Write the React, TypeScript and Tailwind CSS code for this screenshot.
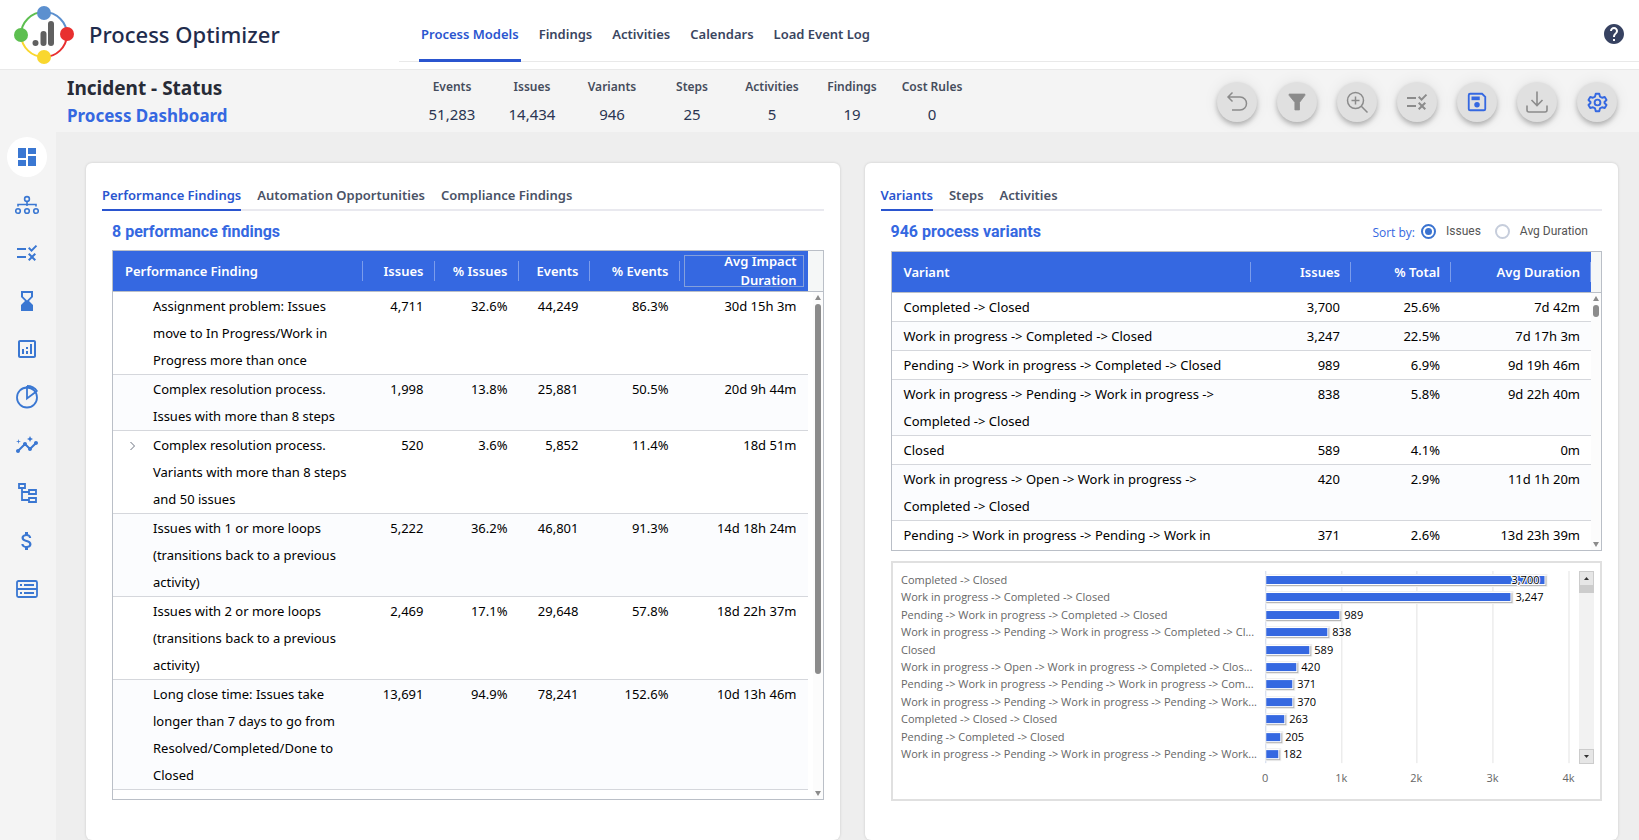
import type { ReactNode } from "react";
import {
  MdAttachMoney,
  MdDashboard,
  MdHelp,
  MdHourglassBottom,
  MdInsights,
  MdOutlineAnalytics,
  MdRule,
} from "react-icons/md";

const models = ["Process Models", "Findings", "Activities", "Calendars", "Load Event Log"];

const stats = [
  { label: "Events", value: "51,283" },
  { label: "Issues", value: "14,434" },
  { label: "Variants", value: "946" },
  { label: "Steps", value: "25" },
  { label: "Activities", value: "5" },
  { label: "Findings", value: "19" },
  { label: "Cost Rules", value: "0" },
];

const findings = [
  {
    name: "Assignment problem: Issues move to In Progress/Work in Progress more than once",
    cells: ["4,711", "32.6%", "44,249", "86.3%", "30d 15h 3m"],
  },
  {
    name: "Complex resolution process. Issues with more than 8 steps",
    cells: ["1,998", "13.8%", "25,881", "50.5%", "20d 9h 44m"],
  },
  {
    name: "Complex resolution process. Variants with more than 8 steps and 50 issues",
    cells: ["520", "3.6%", "5,852", "11.4%", "18d 51m"],
    expandable: true,
  },
  {
    name: "Issues with 1 or more loops (transitions back to a previous activity)",
    cells: ["5,222", "36.2%", "46,801", "91.3%", "14d 18h 24m"],
  },
  {
    name: "Issues with 2 or more loops (transitions back to a previous activity)",
    cells: ["2,469", "17.1%", "29,648", "57.8%", "18d 22h 37m"],
  },
  {
    name: "Long close time: Issues take longer than 7 days to go from Resolved/Completed/Done to Closed",
    cells: ["13,691", "94.9%", "78,241", "152.6%", "10d 13h 46m"],
  },
];

const variants = [
  { name: "Completed -> Closed", cells: ["3,700", "25.6%", "7d 42m"] },
  { name: "Work in progress -> Completed -> Closed", cells: ["3,247", "22.5%", "7d 17h 3m"] },
  { name: "Pending -> Work in progress -> Completed -> Closed", cells: ["989", "6.9%", "9d 19h 46m"] },
  {
    name: "Work in progress -> Pending -> Work in progress -> Completed -> Closed",
    cells: ["838", "5.8%", "9d 22h 40m"],
  },
  { name: "Closed", cells: ["589", "4.1%", "0m"] },
  {
    name: "Work in progress -> Open -> Work in progress -> Completed -> Closed",
    cells: ["420", "2.9%", "11d 1h 20m"],
  },
  {
    name: "Pending -> Work in progress -> Pending -> Work in progress -> Completed -> Closed",
    cells: ["371", "2.6%", "13d 23h 39m"],
  },
];

const bars = [
  { label: "Completed -> Closed", value: 3700 },
  { label: "Work in progress -> Completed -> Closed", value: 3247 },
  { label: "Pending -> Work in progress -> Completed -> Closed", value: 989 },
  { label: "Work in progress -> Pending -> Work in progress -> Completed -> Cl...", value: 838 },
  { label: "Closed", value: 589 },
  { label: "Work in progress -> Open -> Work in progress -> Completed -> Clos...", value: 420 },
  { label: "Pending -> Work in progress -> Pending -> Work in progress -> Com...", value: 371 },
  { label: "Work in progress -> Pending -> Work in progress -> Pending -> Work...", value: 370 },
  { label: "Completed -> Closed -> Closed", value: 263 },
  { label: "Pending -> Completed -> Closed", value: 205 },
  { label: "Work in progress -> Pending -> Work in progress -> Pending -> Work...", value: 182 },
];

function Icon({ size = 24, width = 2, children }: { size?: number; width?: number; children: ReactNode }) {
  return (
    <svg width={size} height={size} viewBox="0 0 24 24" fill="none" stroke="currentColor" strokeWidth={width}>
      {children}
    </svg>
  );
}

const sideItems = [
  { label: "Dashboard", icon: <MdDashboard size={24} /> },
  {
    label: "Process map",
    icon: (
      <Icon width={1.6}>
        <circle cx="12" cy="6" r="2.4" />
        <circle cx="3" cy="18" r="2.3" />
        <circle cx="12" cy="18" r="2.3" />
        <circle cx="21" cy="18" r="2.3" />
        <path d="M12 8.4V13M3 13.5V11.5H21V13.5" />
      </Icon>
    ),
  },
  { label: "Rules", icon: <MdRule size={24} /> },
  { label: "Durations", icon: <MdHourglassBottom size={24} /> },
  { label: "Analytics", icon: <MdOutlineAnalytics size={24} /> },
  {
    label: "Breakdown",
    icon: (
      <Icon width={1.8}>
        <circle cx="12" cy="12.5" r="10" />
        <path d="M12 1V13.5L22 6" />
        <path d="M12 1C16 1 20 3 22.2 6.4" />
      </Icon>
    ),
  },
  { label: "Insights", icon: <MdInsights size={24} /> },
  {
    label: "Hierarchy",
    icon: (
      <Icon width={1.8}>
        <path d="M4 3H10V7H4ZM14 9H21V13H14ZM14 17H21V21H14ZM7 7V19H14M7 11H14" />
      </Icon>
    ),
  },
  { label: "Costs", icon: <MdAttachMoney size={24} /> },
  {
    label: "Data",
    icon: (
      <Icon width={1.8}>
        <rect x="2" y="4" width="20" height="16" rx="1.5" />
        <path d="M2 12H22M5 8H7M9 8H19M5 16H7M9 16H19" />
      </Icon>
    ),
  },
];

const tools = [
  {
    label: "Undo",
    icon: (
      <Icon width={1.5}>
        <path d="M7.5 2.5L3 7L7.5 11.5M3 7H15C19 7 21.500 10 21.500 13.5S19 20 15 20H7" />
      </Icon>
    ),
  },
  {
    label: "Filter",
    icon: (
      <Icon size={20} width={1}>
        <path d="M2.500 2.500H21.500V4L15 12.500V21.500H9.500V12.500L2.500 4Z" fill="currentColor" />
      </Icon>
    ),
  },
  {
    label: "Zoom in",
    icon: (
      <Icon width={1.5}>
        <circle cx="10.5" cy="10.5" r="8" />
        <path d="M16.3 16.3L22.500 22.500M6.5 10.5H14.5M10.5 6.5V14.5" />
      </Icon>
    ),
  },
  { label: "Rules", icon: <MdRule size={24} /> },
  {
    label: "Save",
    active: true,
    icon: (
      <Icon size={22}>
        <path d="M4.5 3H17.5L21 6.5V19.5Q21 21 19.5 21H4.5Q3 21 3 19.5V4.5Q3 3 4.5 3Z" />
        <rect x="6" y="6" width="9" height="4" fill="currentColor" stroke="none" />
        <circle cx="12" cy="15" r="3" fill="currentColor" stroke="none" />
      </Icon>
    ),
  },
  {
    label: "Download",
    icon: (
      <Icon width={1.6}>
        <path d="M12 1.5V15M6.5 10L12 15.5L17.5 10M2 15.500V20Q2 22 4 22H20Q22 22 22 20V15.500" />
      </Icon>
    ),
  },
  {
    label: "Settings",
    active: true,
    icon: (
      <Icon size={21} width={2.2}>
        <path
          strokeLinejoin="round"
          d="M10 2H14L14.800 5.200L17.200 6.600L20.300 5.700L22.300 9.100L20 11.400V12.600L22.300 14.900L20.300 18.300L17.200 17.400L14.800 18.800L14 22H10L9.200 18.800L6.800 17.400L3.700 18.300L1.700 14.900L4 12.600V11.400L1.700 9.100L3.700 5.700L6.800 6.600L9.200 5.200Z"
        />
        <circle cx="12" cy="12" r="3.3" />
      </Icon>
    ),
  },
];

function Logo() {
  return (
    <svg width="60" height="58" viewBox="0 0 60 58" fill="none">
      <g strokeWidth="2">
        <path d="M7 29A23 23 0 0 1 30 6" stroke="#5dbf50" />
        <path d="M30 6A23 23 0 0 1 53 29" stroke="#5c90cf" />
        <path d="M53 29A23 23 0 0 1 30 51" stroke="#e83030" />
        <path d="M30 51A23 23 0 0 1 7 29" stroke="#f9d72f" />
      </g>
      <circle cx="30" cy="7" r="7" fill="#5c90cf" />
      <circle cx="53" cy="28" r="7" fill="#e83030" />
      <circle cx="30" cy="51" r="7" fill="#f9d72f" />
      <circle cx="7" cy="29" r="7" fill="#5dbf50" />
      <circle cx="21.5" cy="37" r="3" fill="#606060" />
      <rect x="26.5" y="25" width="6" height="15" rx="3" fill="#606060" />
      <rect x="34" y="15" width="6" height="25" rx="3" fill="#606060" />
    </svg>
  );
}

function Tabs({ items }: { items: string[] }) {
  return (
    <nav className="flex gap-4 border-b-2 border-[#e9e9ef]">
      {items.map((item, i) => (
        <button
          key={item}
          className={
            i === 0
              ? "-mb-0.5 border-b-2 border-[#2a55cf] pb-0.5 text-[13px] leading-6 font-semibold text-[#2a55cf]"
              : "pb-0.5 text-[13px] leading-6 font-semibold text-[#4a5266]"
          }
        >
          {item}
        </button>
      ))}
    </nav>
  );
}

function HeadCell({ children }: { children: ReactNode }) {
  return (
    <th className="p-0 font-semibold">
      <div className="flex h-5 items-center justify-end border-r border-white/35 pt-0.5 pr-2.5">{children}</div>
    </th>
  );
}

// Header gutter above a slim scrollbar
function Scrollbar({ gutter, thumb }: { gutter: string; thumb: string }) {
  return (
    <div className={gutter}>
      <div className="h-[41px] w-full shrink-0 border-b border-[#babfc7] bg-[#f5f7f7]" />
      <div className="flex w-2.5 flex-1 flex-col items-center bg-[#fcfcfc] py-[3px]">
        <svg width="6" height="5" viewBox="0 0 6 5" fill="#8b8b8b">
          <path d="M3 0L6 5H0Z" />
        </svg>
        <div className={thumb} />
        <svg className="mt-auto" width="6" height="5" viewBox="0 0 6 5" fill="#8b8b8b">
          <path d="M0 0H6L3 5Z" />
        </svg>
      </div>
    </div>
  );
}

function FindingsTable() {
  return (
    <div className="ml-2.5 flex h-[550px] overflow-hidden border border-[#babfc7]">
      <div className="min-w-0 flex-1 overflow-hidden">
        <table className="w-full table-fixed text-right text-[13px] leading-[27px] text-black">
          <colgroup>
            <col />
            <col className="w-[72px]" />
            <col className="w-[84px]" />
            <col className="w-[71px]" />
            <col className="w-[90px]" />
            <col className="w-[128px]" />
          </colgroup>
          <thead>
            <tr className="h-10 border-b border-[#babfc7] bg-[#3568e1] text-white">
              <th className="p-0 text-left font-semibold">
                <div className="flex h-5 items-center border-r border-white/35 pt-0.5 pl-3">Performance Finding</div>
              </th>
              <HeadCell>Issues</HeadCell>
              <HeadCell>% Issues</HeadCell>
              <HeadCell>Events</HeadCell>
              <HeadCell>% Events</HeadCell>
              <th className="p-0 font-semibold">
                <div className="mx-1 flex h-8 items-center border border-[#84a0dc] pr-1.5 pl-8 leading-[19px]">
                  Avg Impact Duration
                </div>
              </th>
            </tr>
          </thead>
          <tbody>
            {findings.map((row) => (
              <tr key={row.name} className="border-b border-[#d5d7dc] align-top even:bg-[#fbfcfe]">
                <td className="flex p-0 pt-px text-left">
                  <div className="flex w-10 shrink-0 justify-center">
                    {row.expandable && (
                      <button aria-label="Expand" className="h-7 text-[#6b7280]">
                        <svg width="8" height="10" viewBox="0 0 8 10" fill="none" stroke="currentColor">
                          <path d="M1.5 1L5.5 5L1.5 9" />
                        </svg>
                      </button>
                    )}
                  </div>
                  <span className="pr-2">{row.name}</span>
                </td>
                {row.cells.map((cell) => (
                  <td key={cell} className="p-0 pt-px pr-[11px]">
                    {cell}
                  </td>
                ))}
              </tr>
            ))}
          </tbody>
        </table>
      </div>
      <Scrollbar
        gutter="flex w-[15px] shrink-0 flex-col items-end"
        thumb="mt-1 h-[370px] w-1.5 rounded-full bg-[#8b8b8b]"
      />
    </div>
  );
}

function VariantsTable() {
  return (
    <div className="ml-2.5 flex h-[300px] overflow-hidden border border-[#babfc7]">
      <div className="min-w-0 flex-1 overflow-hidden">
        <table className="w-full table-fixed text-right text-[13px] leading-[27px] text-black">
          <colgroup>
            <col />
            <col className="w-[100px]" />
            <col className="w-[100px]" />
            <col className="w-[140px]" />
          </colgroup>
          <thead>
            <tr className="h-10 border-b border-[#babfc7] bg-[#3568e1] text-white">
              <th className="p-0 text-left font-semibold">
                <div className="flex h-5 items-center border-r border-white/35 pt-0.5 pl-3">Variant</div>
              </th>
              <HeadCell>Issues</HeadCell>
              <HeadCell>% Total</HeadCell>
              <HeadCell>Avg Duration</HeadCell>
            </tr>
          </thead>
          <tbody>
            {variants.map((row) => (
              <tr key={row.name} className="border-b border-[#d5d7dc] align-top even:bg-[#fbfcfe]">
                <td className="p-0 pt-px pr-2 pl-3 text-left">{row.name}</td>
                {row.cells.map((cell) => (
                  <td key={cell} className="p-0 pt-px pr-[11px]">
                    {cell}
                  </td>
                ))}
              </tr>
            ))}
          </tbody>
        </table>
      </div>
      <Scrollbar
        gutter="flex w-2.5 shrink-0 flex-col items-end"
        thumb="mt-1 h-3 w-1.5 shrink-0 rounded-full bg-[#8b8b8b]"
      />
    </div>
  );
}

function VariantsChart() {
  const x0 = 372;
  const scale = 0.0757;
  return (
    <div className="mt-2.5 ml-2.5 flex border-2 border-[#e0e0e0]">
      <svg viewBox="0 0 683 236" className="min-w-0 flex-1 font-['Open_Sans',sans-serif]" fontSize="11">
        {[0, 1, 2, 3, 4].map((k) => (
          <g key={k}>
            <rect x={x0 + Math.round(k * 75.7)} y="8" width="1" height="192" fill={k === 0 ? "#ccd6eb" : "#e3e3e3"} />
            <text x={x0 + Math.round(k * 75.7)} y="219" textAnchor="middle" fill="#666">
              {k === 0 ? "0" : `${k}k`}
            </text>
          </g>
        ))}
        {bars.map((bar, i) => {
          const y = 13 + Math.round(i * 17.4);
          const w = Math.round(bar.value * scale);
          const inside = i === 0;
          return (
            <g key={i}>
              <text x="8" y={y + 8} fill="#666">
                {bar.label}
              </text>
              <rect x={x0} y={y - 2} width={w + 2} height="13" fill="#f0f0f0" />
              <rect x={x0 + 1} y={y} width={w} height="10" fill="#b5b5b5" />
              <rect x={x0 + 1} y={y - 1} width={w - 1} height="10" fill="#fff" />
              <rect x={x0 + 1} y={y} width={w - 2} height="8" fill="#3568e1" />
              <text
                x={inside ? x0 + w - 6 : x0 + w + 4}
                y={y + 8}
                textAnchor={inside ? "end" : "start"}
                fill="#000"
                stroke={inside ? "#fff" : "none"}
                strokeWidth={inside ? 2 : 0}
                paintOrder="stroke"
              >
                {bar.value.toLocaleString("en-US")}
              </text>
            </g>
          );
        })}
      </svg>
      <div className="mt-2 mr-1.5 ml-[3px] flex h-[193px] w-[15px] flex-col bg-[#f2f2f2]">
        <button aria-label="Scroll up" className="flex h-[15px] items-center justify-center border border-[#ccc] bg-[#e6e6e6]">
          <svg width="5" height="3" viewBox="0 0 5 3" fill="#333">
            <path d="M0 3L2.5 0L5 3Z" />
          </svg>
        </button>
        <div className="h-[7px] bg-[#ccc]" />
        <button
          aria-label="Scroll down"
          className="mt-auto flex h-[15px] items-center justify-center border border-[#ccc] bg-[#e6e6e6]"
        >
          <svg width="5" height="3" viewBox="0 0 5 3" fill="#333">
            <path d="M0 0H5L2.5 3Z" />
          </svg>
        </button>
      </div>
    </div>
  );
}

const radioClass =
  "m-0 size-[15px] appearance-none rounded-full border-2 border-[#c6cddb] bg-white p-[2px] checked:border-[#3a73d0] checked:bg-[#3a73d0] checked:bg-clip-content";

export default function App() {
  return (
    <div className="flex min-h-screen flex-col bg-[#eee] font-['Noto_Sans','Open_Sans',sans-serif] text-[#1f2c4d]">
      {/* Top bar */}
      <header className="flex h-[70px] border-b border-[#e9e9e9] bg-white">
        <div className="flex w-[399px] shrink-0 items-center gap-[15px] pl-3.5">
          <Logo />
          <h1 className="text-[22px] font-medium whitespace-nowrap text-[#1f2c4d]">Process Optimizer</h1>
        </div>
        <div className="flex h-[62px] flex-1 items-stretch border-b border-[#e9e9e9] pl-5">
          <nav className="-mb-px flex gap-4">
            {models.map((item, i) => (
              <a
                key={item}
                href="#"
                className={
                  i === 0
                    ? "flex items-center border-b-[3px] border-[#2a55cf] px-0.5 pt-2.5 text-[13px] font-semibold text-[#2a55cf]"
                    : "flex items-center border-b-[3px] border-transparent px-0.5 pt-2.5 text-[13px] font-semibold text-[#3a4560]"
                }
              >
                {item}
              </a>
            ))}
          </nav>
          <button aria-label="Help" className="mt-1.5 mr-[13px] ml-auto text-[#374261]">
            <MdHelp size={24} />
          </button>
        </div>
      </header>

      {/* Model summary */}
      <section className="flex h-[62px] items-center bg-[#f4f4f4] pt-0.5">
        <div className="w-[412px] shrink-0 pl-[67px]">
          <h2 className="text-[19px] leading-7 font-bold text-[#272b36]">Incident - Status</h2>
          <h3 className="text-[17px] leading-7 font-bold text-[#3568e1]">Process Dashboard</h3>
        </div>
        <dl className="flex text-center">
          {stats.map((s) => (
            <div key={s.label} className="w-20">
              <dt className="text-[12px] leading-6 font-semibold whitespace-nowrap text-[#454c5c]">{s.label}</dt>
              <dd className="text-[15px] leading-[30px] text-[#2a3552]">{s.value}</dd>
            </div>
          ))}
        </dl>
        <div className="mr-[22px] ml-auto flex gap-5">
          {tools.map((tool) => (
            <button
              key={tool.label}
              aria-label={tool.label}
              className={
                tool.active
                  ? "flex size-10 items-center justify-center rounded-full bg-[#e0e0e0] text-[#3568e1] shadow-[0_3px_5px_rgba(0,0,0,0.25),0_0_16px_rgba(0,0,0,0.07)]"
                  : "flex size-10 items-center justify-center rounded-full bg-[#e0e0e0] text-[#8b8b8b] shadow-[0_3px_5px_rgba(0,0,0,0.25),0_0_16px_rgba(0,0,0,0.07)]"
              }
            >
              {tool.icon}
            </button>
          ))}
        </div>
      </section>

      <div className="flex flex-1">
        <aside className="flex w-14 shrink-0 flex-col gap-2 bg-[#f4f4f4] pt-[5px] pl-[7px]">
          {sideItems.map((item, i) => (
            <button
              key={item.label}
              aria-label={item.label}
              className={
                i === 0
                  ? "flex size-10 items-center justify-center rounded-full bg-white text-[#3a77d2]"
                  : "flex size-10 items-center justify-center rounded-full text-[#3a77d2]"
              }
            >
              {item.icon}
            </button>
          ))}
        </aside>

        <main className="grid min-w-0 flex-1 grid-cols-2 gap-[25px] pt-[31px] pr-[21px] pl-[30px]">
          <section className="rounded-md bg-white px-4 pt-5 shadow-[0_0_3px_rgba(0,0,0,0.15)]">
            <Tabs items={["Performance Findings", "Automation Opportunities", "Compliance Findings"]} />
            <h4 className="ml-2.5 flex h-[39px] items-center pt-0.5 font-['Roboto',sans-serif] text-[16px] font-bold text-[#3568e1]">
              8 performance findings
            </h4>
            <FindingsTable />
          </section>

          <section className="rounded-md bg-white px-4 pt-5 shadow-[0_0_3px_rgba(0,0,0,0.15)]">
            <Tabs items={["Variants", "Steps", "Activities"]} />
            <div className="ml-2.5 flex h-10 items-center pr-3.5 font-['Roboto',sans-serif]">
              <h4 className="pt-0.5 text-[16px] font-bold text-[#3568e1]">946 process variants</h4>
              <div className="ml-auto flex items-center text-[12px] text-[#555]">
                <span className="mr-1.5 pt-1 font-['Open_Sans',sans-serif] text-[#3568e1]">Sort by:</span>
                <label className="mr-3.5 flex items-center gap-2.5">
                  <input type="radio" name="sort" defaultChecked className={radioClass} />
                  Issues
                </label>
                <label className="flex items-center gap-2.5">
                  <input type="radio" name="sort" className={radioClass} />
                  Avg Duration
                </label>
              </div>
            </div>
            <VariantsTable />
            <VariantsChart />
          </section>
        </main>
      </div>
    </div>
  );
}
